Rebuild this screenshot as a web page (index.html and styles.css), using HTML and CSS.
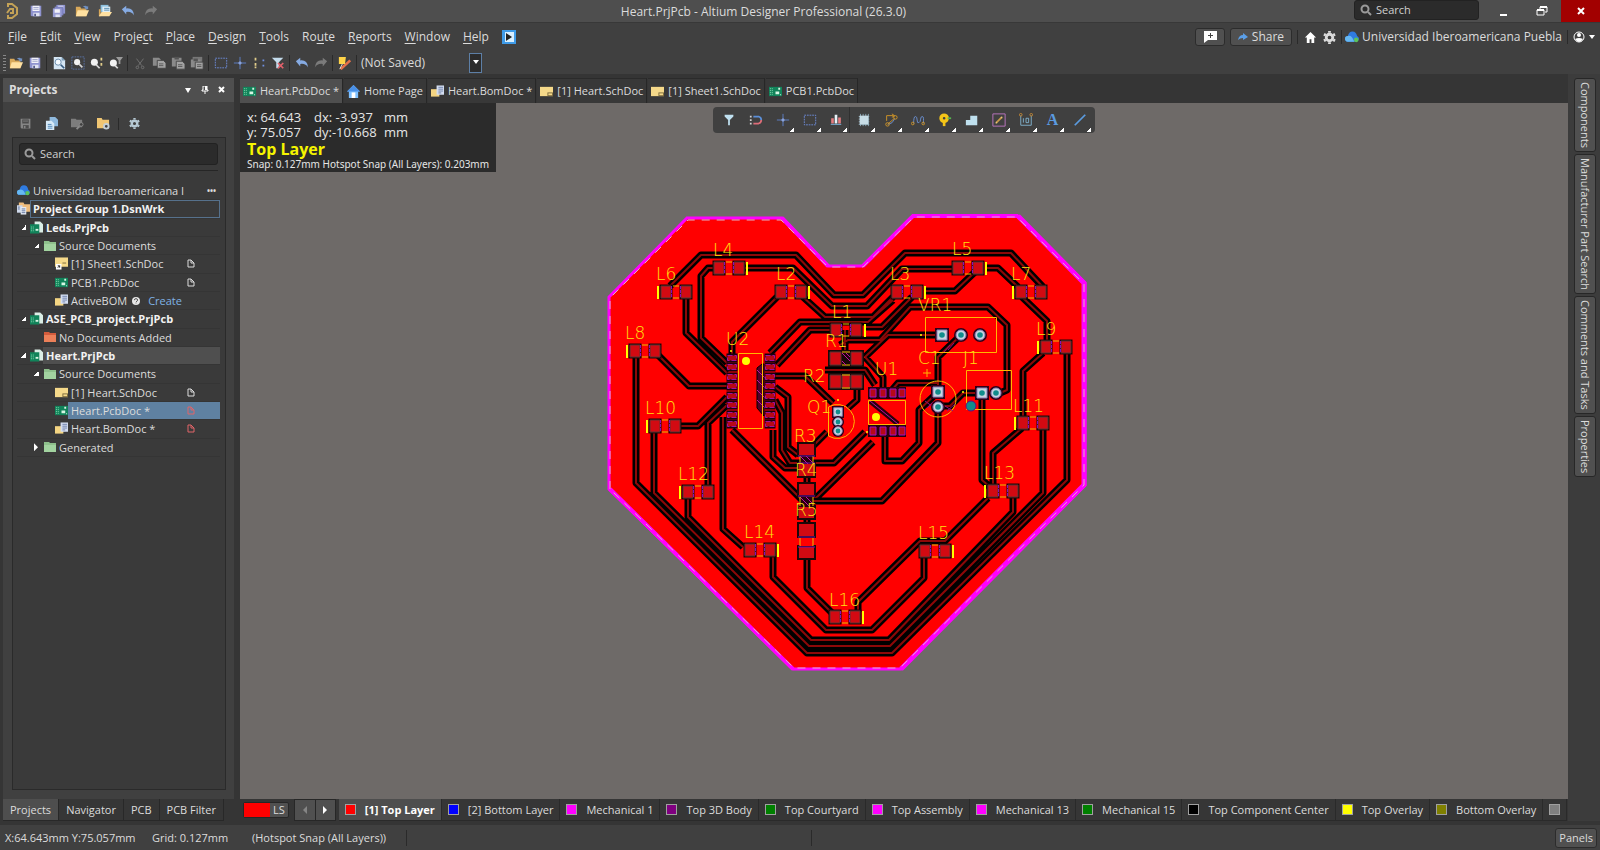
FILE: index.html
```html
<!DOCTYPE html>
<html lang="en">
<head>
<meta charset="utf-8">
<title>Heart.PrjPcb - Altium Designer Professional (26.3.0)</title>
<link rel="stylesheet" href="styles.css">
</head>
<body>
<svg class="sprite" aria-hidden="true">
  <symbol id="i-save" viewBox="0 0 16 16"><path d="M2 2h12v12H3l-1-1z" fill="#8f93cf"/><path d="M4 2h8v6H4z" fill="#f1f1f8"/><path d="M5 4h6M5 6h6" stroke="#9aa0c8"/><path d="M5 10h7v4H5z" fill="#dfe2f2"/><path d="M6 11h2v3H6z" fill="#555b8d"/></symbol>
  <symbol id="i-save-off" viewBox="0 0 16 16"><path d="M2 2h12v12H3l-1-1z" fill="#858585"/><path d="M4 3h8v5H4z" fill="#4c4c4c"/><path d="M5 5h6" stroke="#858585"/><path d="M5 10h7v4H5z" fill="#4c4c4c"/><path d="M6 11h2v3H6z" fill="#858585"/></symbol>
  <symbol id="i-saveall" viewBox="0 0 16 16"><path d="M5 1h10v10H5z" fill="#8f93cf"/><path d="M7 2h6v3H7z" fill="#e8e8f5"/><path d="M3 3h10v10H3z" fill="#7e83c2"/><path d="M1 5h10v10H1z" fill="#9a9ed6"/><path d="M3 6h6v4H3z" fill="#f1f1f8"/><path d="M4 12h5v3H4z" fill="#dfe2f2"/></symbol>
  <symbol id="i-open" viewBox="0 0 16 16"><path d="M1 3h5l1 2h6v9H1z" fill="#d9a95a"/><path d="M3 7h13l-3 7H1z" fill="#ffe0a0"/><path d="M9 3q3-2 5 0l1-1v4h-4l1-1q-1-2-3-2z" fill="#6f8fc0"/></symbol>
  <symbol id="i-openprj" viewBox="0 0 16 16"><path d="M3 1h9v8H3z" fill="#8ec1df"/><path d="M5 3h9v8H5z" fill="#dfeef6"/><path d="M7 5h6M7 7h6" stroke="#4d86aa"/><path d="M1 6h2v8H1z" fill="#d9a95a"/><path d="M4 9h12l-3 5H1z" fill="#ffe0a0"/></symbol>
  <symbol id="i-undo" viewBox="0 0 16 16"><path d="M1 6l5-4v3q8-1 9 8-3-5-9-4v3z" fill="#86abe3"/></symbol>
  <symbol id="i-redo" viewBox="0 0 16 16"><path d="M15 6l-5-4v3Q2 4 1 13q3-5 9-4v3z" fill="#7b7b7b"/></symbol>
  <symbol id="i-logo" viewBox="0 0 14 18"><path d="M3 5V2h4l5 4v6l-5 4H3v-3M2 11l3-4h3v4H5" fill="none" stroke="#c3a257" stroke-width="2"/></symbol>
  <symbol id="i-zoomdoc" viewBox="0 0 16 16"><path d="M2 1h9l4 4v10H2z" fill="#d5e6f4"/><path d="M11 1l4 4h-4z" fill="#7d9db8"/><circle cx="7" cy="7" r="3.500" fill="#f4faff" stroke="#5f83a6"/><path d="M10 10l4 4" stroke="#385d80" stroke-width="2"/></symbol>
  <symbol id="i-zoomarea" viewBox="0 0 16 16"><path d="M1 1h14v14H1z" fill="none" stroke="#5a74a8" stroke-dasharray="2 1"/><circle cx="7" cy="7" r="3.500" fill="#f2f2f2"/><path d="M9 9l4 4" stroke="#d5d5d5" stroke-width="2"/></symbol>
  <symbol id="i-zoomsel" viewBox="0 0 16 16"><circle cx="5" cy="7" r="4" fill="#f2f2f2"/><path d="M7 10l4 4" stroke="#d9d9d9" stroke-width="2"/><path d="M13 2v3M13 8v3" stroke="#e1cd8a" stroke-width="2"/></symbol>
  <symbol id="i-zoomflt" viewBox="0 0 16 16"><circle cx="5" cy="8" r="4" fill="#f2f2f2"/><path d="M7 11l3 3" stroke="#d9d9d9" stroke-width="2"/><path d="M8 1h8l-3 4v4h-2V5z" fill="#9a9a9a"/></symbol>
  <symbol id="i-cut" viewBox="0 0 16 16"><path d="M4 3l6 8M12 3l-6 8" stroke="#757575"/><circle cx="5" cy="13" r="1.500" fill="none" stroke="#757575"/><circle cx="11" cy="13" r="1.500" fill="none" stroke="#757575"/></symbol>
  <symbol id="i-copy" viewBox="0 0 16 16"><path d="M1 2h7l2 2v7H1z" fill="#8a8a8a"/><path d="M6 5h7l3 3v6H6z" fill="#a3a3a3" stroke="#444"/><path d="M8 9h5M8 11h5" stroke="#555"/></symbol>
  <symbol id="i-paste" viewBox="0 0 16 16"><path d="M1 2h11v10H1z" fill="#8a8a8a"/><path d="M4 1h5v3H4z" fill="#555"/><path d="M6 6h7l3 3v6H6z" fill="#a3a3a3" stroke="#444"/><path d="M8 10h5M8 12h5" stroke="#555"/></symbol>
  <symbol id="i-paste2" viewBox="0 0 16 16"><path d="M3 1h11v9H3z" fill="#777"/><path d="M1 4h11v9H1z" fill="#8a8a8a"/><path d="M4 3h5v3H4z" fill="#555"/><path d="M6 7h9v8H6z" fill="#a3a3a3" stroke="#444"/><path d="M8 10h5M8 12h5" stroke="#555"/></symbol>
  <symbol id="i-rect" viewBox="0 0 16 16"><path d="M1.500 2.500h13v11h-13z" fill="none" stroke="#6f8fe0" stroke-dasharray="2 1"/></symbol>
  <symbol id="i-cross" viewBox="0 0 16 16"><path d="M8 1v14M1 8h14" stroke="#5f83cf"/><path d="M8 6v4M6 8h4" stroke="#a3bdf5"/></symbol>
  <symbol id="i-dots" viewBox="0 0 16 16"><path d="M4 2v3M4 8v3M4 12v2" stroke="#e1cd8a" stroke-width="2"/><path d="M13 4v2M13 10v2" stroke="#6f8fe0" stroke-width="2"/></symbol>
  <symbol id="i-clearflt" viewBox="0 0 16 16"><path d="M1 2h13l-5 5v7H6V7z" fill="#c4dcec"/><path d="M8 8l6 6M14 8l-6 6" stroke="#e2616b" stroke-width="2"/></symbol>
  <symbol id="i-wand" viewBox="0 0 16 16"><path d="M3 15L14 5" stroke="#e5704a" stroke-width="3"/><path d="M1 1h8l-1 8H1z" fill="#ffd348"/><path d="M5 9l-3 6" stroke="#f0efe8"/></symbol>
  <symbol id="i-sch" viewBox="0 0 14 12"><path d="M0 1h14v10H0z" fill="#f5d98a"/><path d="M8 7h6v4H8z" fill="#7a693d"/><path d="M9 8h4v2H9z" fill="#f5d98a"/></symbol>
  <symbol id="i-pcb" viewBox="0 0 14 12"><path d="M0 1h14v10H0z" fill="#11835a"/><path d="M1 3h4M1 5h4M1 7h4M1 9h4" stroke="#8ee0b5" stroke-dasharray="1 1"/><path d="M7 6h4v3H7zM10 2h2v2h-2zM12 9h1v1h-1z" fill="#d8f5e4"/></symbol>
  <symbol id="i-bom" viewBox="0 0 14 13"><path d="M0 4h9v8H0z" fill="#f4d582"/><path d="M6 0h8v10H6z" fill="#d3ddf0"/><path d="M8 2h5M8 4h5M8 6h5M8 8h3" stroke="#6e80aa"/></symbol>
  <symbol id="i-home" viewBox="0 0 14 14"><path d="M7 0l7 7h-2v7H2V7H0z" fill="#7ec0ff"/><path d="M7 0l7 7H0z" fill="#4a90e6"/><path d="M5 8h4v6H5z" fill="#fff"/></symbol>
  <symbol id="i-prj" viewBox="0 0 14 13"><path d="M5 0h6l3 3v9H5z" fill="#dbeee6"/><path d="M0 3h10v10H0z" fill="#11835a"/><path d="M1 6h4M1 8h4M1 10h4" stroke="#8ee0b5" stroke-dasharray="1 1"/><path d="M6 8h3v2H6z" fill="#d8f5e4"/></symbol>
  <symbol id="i-folder" viewBox="0 0 12 10"><path d="M0 0h5l1 1h6v9H0z" fill="#8ec08c"/><path d="M0 3h12v7H0z" fill="#a2d3a0"/></symbol>
  <symbol id="i-folder-red" viewBox="0 0 12 10"><path d="M0 0h5l1 1h6v9H0z" fill="#d35c3c"/><path d="M0 3h12v7H0z" fill="#ec8059"/></symbol>
  <symbol id="i-group" viewBox="0 0 14 13"><path d="M2 0h5l1 2h6v8H2z" fill="#f0bd7d"/><path d="M0 3h6v8H0z" fill="#cfd9ea"/><path d="M4 5h6v8H4z" fill="#e9eff8"/><path d="M1 5h2M1 7h2M5 7h4M5 9h4M5 11h4" stroke="#5e7199"/></symbol>
  <symbol id="i-cloud" viewBox="0 0 15 12"><path d="M3 11q-3 0-3-3t3-3q1-5 5-5t5 5q2 1 2 3t-3 3z" fill="#2f7be0"/><path d="M3 11q-3 0-3-3t3-3q3-1 5 2l2 4z" fill="#66b8f2"/><circle cx="12" cy="9" r="2.500" fill="#5cc35a"/></symbol>
  <symbol id="i-search" viewBox="0 0 12 12"><circle cx="5" cy="5" r="3.500" fill="none" stroke="currentColor" stroke-width="2"/><path d="M8 8l3 3" stroke="currentColor" stroke-width="2"/></symbol>
  <symbol id="i-doc" viewBox="0 0 8 9"><path d="M1 1h3l3 3v4H1zM4 1v3h3" fill="none" stroke="currentColor"/></symbol>
  <symbol id="i-gear" viewBox="0 0 14 14"><circle cx="7" cy="7" r="3.500" fill="none" stroke="currentColor" stroke-width="3"/><path d="M7 0v2M7 12v2M1 3.500l2 1M11 9.500l2 1M13 3.500l-2 1M3 9.500l-2 1" stroke="currentColor" stroke-width="3"/></symbol>
  <symbol id="i-docs" viewBox="0 0 14 14"><path d="M5 0h6l3 3v7H5z" fill="#8fb9dd"/><path d="M1 4h6l3 3v7H1z" fill="#d6e9f7"/><path d="M3 8h4M3 10h5M3 12h5" stroke="#4b83b4"/></symbol>
  <symbol id="i-fsearch" viewBox="0 0 14 14"><path d="M0 2h5l1 1h6v8H0z" fill="#7d7d7d"/><circle cx="11" cy="8" r="2" fill="#404040" stroke="#8c8c8c"/><path d="M9 10l-3 3" stroke="#8c8c8c" stroke-width="2"/></symbol>
  <symbol id="i-fgear" viewBox="0 0 14 14"><path d="M0 1h5l1 2h7v9H0z" fill="#f0c673"/><circle cx="10" cy="10" r="2.500" fill="#404040" stroke="#c3d0d8" stroke-width="2"/></symbol>
  <symbol id="i-q" viewBox="0 0 10 10"><circle cx="5" cy="5" r="5" fill="#e6e6e6"/><path d="M3 4q0-2 2-2t2 2q0 1-2 2M5 7v1" fill="none" stroke="#333"/></symbol>
  <!-- board parts -->
  <symbol id="p-led" viewBox="-20 -10 40 20" overflow="visible"><path d="M-16.500-7.500h13v15h-13zM3.500-7.500h13v15h-13z" fill="#200606"/><path d="M-15-6h10v12h-10zM5-6h10v12H5z" fill="#d20a12" stroke="#5a3434"/><path d="M-3-6h6M-3 6h6" stroke="#e8c000"/><path d="M-4.500-6v12M4.500-6v12" stroke="#8010c0" stroke-dasharray="3 1"/></symbol>
  <symbol id="p-ic" viewBox="-6 -4 12 8" overflow="visible"><path d="M-5.500-4.500h11v9h-11z" fill="#1a0010"/><path d="M-4.500-2.500h9v5h-9z" fill="#b80818" stroke="#a010a0" stroke-dasharray="5 2"/></symbol>
  <symbol id="p-sq" viewBox="-7 -7 14 14" overflow="visible"><path d="M-7-7H7V7H-7z" fill="#300018"/><path d="M-5-5H5V5H-5z" fill="#c8d4e0" stroke="#8a80b8"/><circle r="2.800" fill="#118c8c"/></symbol>
  <symbol id="p-rd" viewBox="-7 -7 14 14" overflow="visible"><circle r="7" fill="#300018"/><circle r="5" fill="#c8d4e0" stroke="#8a80b8"/><circle r="2.800" fill="#118c8c"/></symbol>
</svg>

<header class="titlebar">
  <div class="quick">
    <svg class="logo"><use href="#i-logo"/></svg>
    <button class="ib" aria-label="Save"><svg><use href="#i-save"/></svg></button>
    <button class="ib" aria-label="Save all"><svg><use href="#i-saveall"/></svg></button>
    <button class="ib" aria-label="Open"><svg><use href="#i-open"/></svg></button>
    <button class="ib" aria-label="Open project"><svg><use href="#i-openprj"/></svg></button>
    <button class="ib" aria-label="Undo"><svg><use href="#i-undo"/></svg></button>
    <button class="ib" aria-label="Redo"><svg><use href="#i-redo"/></svg></button>
  </div>
  <h1 class="title">Heart.PrjPcb - Altium Designer Professional (26.3.0)</h1>
  <label class="search top-search"><svg><use href="#i-search"/></svg><input type="text" placeholder="Search" aria-label="Search"></label>
  <div class="winbtns">
    <button aria-label="Minimize"><svg viewBox="0 0 12 12"><path d="M3 10h7" stroke="#fff" stroke-width="2"/></svg></button>
    <button aria-label="Restore"><svg viewBox="0 0 12 12"><path d="M4 4V2h7v5H9M1 5h7v5H1z" fill="none" stroke="#fff"/><path d="M1 5h7M4 2h7" stroke="#fff" stroke-width="2"/></svg></button>
    <button class="close" aria-label="Close"><svg viewBox="0 0 12 12"><path d="M3 3l6 6M9 3l-6 6" stroke="#fff" stroke-width="2"/></svg></button>
  </div>
</header>

<nav class="menubar">
  <button><u>F</u>ile</button><button><u>E</u>dit</button><button><u>V</u>iew</button><button>Proje<u>c</u>t</button><button><u>P</u>lace</button><button><u>D</u>esign</button><button><u>T</u>ools</button><button>Ro<u>u</u>te</button><button><u>R</u>eports</button><button><u>W</u>indow</button><button><u>H</u>elp</button>
  <button class="runbtn" aria-label="Run"><svg viewBox="0 0 14 14"><path d="M0 0h14v14H0z" fill="#3f9be8"/><path d="M3 2h9v10H3z" fill="#d9efff"/><path d="M4 3l6 4-6 4z" fill="#222"/></svg></button>
  <div class="account">
    <button class="raised" aria-label="Comment"><svg viewBox="0 0 14 12"><path d="M1 0h13v9H5l-4 3z" fill="#fff"/><path d="M7.500 2v5M5 4.500h5" stroke="#444"/></svg></button>
    <button class="raised share"><svg viewBox="0 0 10 10"><path d="M0 8q1-5 5-5V1l5 4-5 3V6Q2 6 0 8z" fill="#5b9fe8"/></svg>Share</button>
    <i class="sep"></i>
    <button class="ai" aria-label="Home"><svg viewBox="0 0 14 14"><path d="M7 1l6 6h-2v6H8V9H6v4H3V7H1z" fill="#fff"/></svg></button>
    <button class="ai" aria-label="Settings"><svg><use href="#i-gear"/></svg></button>
    <i class="sep"></i>
    <button class="org"><svg><use href="#i-cloud"/></svg>Universidad Iberoamericana Puebla</button>
    <i class="sep"></i>
    <button class="user" aria-label="User"><svg viewBox="0 0 22 12"><circle cx="6" cy="6" r="5" fill="#404040" stroke="#fff"/><circle cx="6" cy="4" r="2" fill="#fff"/><path d="M2 8q4-2 8 0-2 3-4 3T2 8z" fill="#fff"/><path d="M16 4h6l-3 4z" fill="#fff"/></svg></button>
  </div>
</nav>

<div class="toolbar">
  <i class="grip"></i>
  <button class="ib" aria-label="Open"><svg><use href="#i-open"/></svg></button><button class="ib" aria-label="Save"><svg><use href="#i-save"/></svg></button>
  <i class="sep"></i>
  <button class="ib" aria-label="Fit document"><svg><use href="#i-zoomdoc"/></svg></button><button class="ib" aria-label="Zoom area"><svg><use href="#i-zoomarea"/></svg></button><button class="ib" aria-label="Zoom selected"><svg><use href="#i-zoomsel"/></svg></button><button class="ib" aria-label="Zoom filtered"><svg><use href="#i-zoomflt"/></svg></button>
  <i class="sep"></i>
  <button class="ib" aria-label="Cut"><svg><use href="#i-cut"/></svg></button><button class="ib" aria-label="Copy"><svg><use href="#i-copy"/></svg></button><button class="ib" aria-label="Paste"><svg><use href="#i-paste"/></svg></button><button class="ib" aria-label="Paste special"><svg><use href="#i-paste2"/></svg></button>
  <i class="sep"></i>
  <button class="ib" aria-label="Select area"><svg><use href="#i-rect"/></svg></button><button class="ib" aria-label="Move"><svg><use href="#i-cross"/></svg></button><button class="ib" aria-label="Deselect"><svg><use href="#i-dots"/></svg></button><button class="ib" aria-label="Clear filter"><svg><use href="#i-clearflt"/></svg></button>
  <i class="sep"></i>
  <button class="ib" aria-label="Undo"><svg><use href="#i-undo"/></svg></button><button class="ib" aria-label="Redo"><svg><use href="#i-redo"/></svg></button>
  <i class="sep"></i>
  <button class="ib" aria-label="Highlight"><svg><use href="#i-wand"/></svg></button>
  <i class="sep"></i>
  <div class="combo"><span>(Not Saved)</span><button aria-label="Choose view"><svg viewBox="0 0 8 5"><path d="M1 0h6L4 4z" fill="#fff"/></svg></button></div>
</div>

<div class="work">
  <aside class="left">
    <section class="panel">
      <header class="panel-head"><h2>Projects</h2>
        <button aria-label="Panel menu"><svg viewBox="0 0 8 8"><path d="M1 2h6L4 7z" fill="#fff"/></svg></button>
        <button aria-label="Pin"><svg viewBox="0 0 8 8"><path d="M2 0h4v4h1v1H1V4h1zM4 5v3" fill="none" stroke="#fff"/><path d="M4 0h2v4H4z" fill="#fff"/></svg></button>
        <button aria-label="Close panel"><svg viewBox="0 0 8 8"><path d="M1 1l5 5M6 1L1 6" stroke="#fff" stroke-width="2"/></svg></button>
      </header>
      <div class="panel-tools">
        <button class="pb" aria-label="Save"><svg><use href="#i-save-off"/></svg></button><button class="pb" aria-label="Documents"><svg><use href="#i-docs"/></svg></button><button class="pb" aria-label="Explore"><svg><use href="#i-fsearch"/></svg></button><button class="pb" aria-label="Project options"><svg><use href="#i-fgear"/></svg></button><i class="sep"></i><button class="pb gear" aria-label="Settings"><svg><use href="#i-gear"/></svg></button>
      </div>
      <div class="tree-box">
        <label class="search"><svg><use href="#i-search"/></svg><input type="text" placeholder="Search" aria-label="Search projects"></label>
        <hr>
        <ul class="tree">
          <li><svg class="ti"><use href="#i-cloud"/></svg><span>Universidad Iberoamericana I</span><b class="more">•••</b></li>
          <li class="group"><svg class="ti"><use href="#i-group"/></svg><span class="box">Project Group 1.DsnWrk</span></li>
          <li class="d1"><i class="ar"></i><svg class="ti"><use href="#i-prj"/></svg><span class="b">Leds.PrjPcb</span></li>
          <li class="d2"><i class="ar"></i><svg class="fi"><use href="#i-folder"/></svg><span>Source Documents</span></li>
          <li class="d3"><svg class="ti" viewBox="0 0 14 13"><path d="M0 0h14v10H0z" fill="#f5d98a"/><path d="M8 6h4" stroke="#7a693d"/><path d="M1 7h6v6H1z" fill="#fff"/><path d="M3 11l2-2M3 9h2v2" fill="none" stroke="#222"/></svg><span>[1] Sheet1.SchDoc</span><svg class="st"><use href="#i-doc"/></svg></li>
          <li class="d3"><svg class="ti"><use href="#i-pcb"/></svg><span>PCB1.PcbDoc</span><svg class="st"><use href="#i-doc"/></svg></li>
          <li class="d3"><svg class="ti"><use href="#i-bom"/></svg><span>ActiveBOM</span><svg class="q"><use href="#i-q"/></svg><a href="#create">Create</a></li>
          <li class="d1"><i class="ar"></i><svg class="ti"><use href="#i-prj"/></svg><span class="b">ASE_PCB_project.PrjPcb</span></li>
          <li class="d2 noar"><svg class="fi"><use href="#i-folder-red"/></svg><span>No Documents Added</span></li>
          <li class="d1"><i class="ar"></i><svg class="ti"><use href="#i-prj"/></svg><span class="b cur">Heart.PrjPcb</span></li>
          <li class="d2"><i class="ar"></i><svg class="fi"><use href="#i-folder"/></svg><span>Source Documents</span></li>
          <li class="d3"><svg class="ti"><use href="#i-sch"/></svg><span>[1] Heart.SchDoc</span><svg class="st"><use href="#i-doc"/></svg></li>
          <li class="d3 sel"><svg class="ti"><use href="#i-pcb"/></svg><span>Heart.PcbDoc *</span><svg class="st red"><use href="#i-doc"/></svg></li>
          <li class="d3"><svg class="ti"><use href="#i-bom"/></svg><span>Heart.BomDoc *</span><svg class="st red"><use href="#i-doc"/></svg></li>
          <li class="d2"><i class="ar shut"></i><svg class="fi"><use href="#i-folder"/></svg><span>Generated</span></li>
        </ul>
      </div>
    </section>
    <nav class="panel-tabs"><button class="on">Projects</button><button>Navigator</button><button>PCB</button><button>PCB Filter</button></nav>
  </aside>

  <main class="editor">
    <nav class="doctabs">
      <button class="on"><svg><use href="#i-pcb"/></svg>Heart.PcbDoc *</button>
      <button><svg><use href="#i-home"/></svg>Home Page</button>
      <button><svg><use href="#i-bom"/></svg>Heart.BomDoc *</button>
      <button><svg><use href="#i-sch"/></svg>[1] Heart.SchDoc</button>
      <button><svg><use href="#i-sch"/></svg>[1] Sheet1.SchDoc</button>
      <button><svg><use href="#i-pcb"/></svg>PCB1.PcbDoc</button>
    </nav>
    <div class="canvas">
      <svg class="board" viewBox="240 103 1328 696" role="img" aria-label="Heart shaped circuit board, top layer">
        <path d="M687 218H782L828 266H863L913 216H1018L1085 283V485L901 669H793L609 489V297Z" fill="#f00" stroke="#f0f" stroke-width="3"/>
        <path d="M1018 216L1084 283V485L901 669" fill="none" stroke="#f0f" stroke-width="5"/>
        <path d="M828 266L782 218M863 266L913 216H1018M793 669L610 489" fill="none" stroke="#f0f" stroke-width="4"/>
        <path d="M610 489V298L688 220H781L828 267H863L914 217H1017L1084 284V485L900 668H794L610 489" fill="none" stroke="#e6b0c8" stroke-dasharray="8 7"/>
        <defs><path id="tracks" fill="none" stroke-linejoin="round" d="
          M670 286L701 255H796L834 295H863L905 253H1011L1043 287
          M745 268H793L832 306H867L902 269H952
          M803 297L825 317H873L893 297
          M925 291H955L975 272 M987 268H998L1018 287
          M1022 297L1047 321V343 M1043 353L1023 371V417
          M1067 350V480L892 653H807L636 483V355
          M658 355L689 386H727 M680 426H698L727 397
          M654 433V493L809 646H890L1043 493V430
          M688 498V517L811 640H889L1013 512V497
          M773 557V577L826 630H872L924 578V558
          M858 612V602L920 541H945V541L988 498
          M982 398V480L990 487 M1022 428L993 453V485
          M807 558V588L832 613 M723 417V529L743 547
          M708 485V423L727 405 M732 430L803 501H882L938 443V407
          M686 298V333L727 373 M713 268H708L701 276V338L727 363
          M777 297L732 342V355 M770 353L800 322H868L893 300
          M777 365L810 330H830 M865 327H882L912 297
          M840 345L848 340H880L910 307H988L1007 325V390L1000 393
          M865 357L888 335H942 M865 357L883 377V390
          M961 335L938 357V392 M938 383H898L892 390
          M982 393H963L950 406H938 M938 392L919 410V443L902 461H885V437
          M825 370H865L875 385 M857 390V400L848 408
          M873 442L817 497 M865 432L834 463H790L782 450V413L775 400
          M775 376H805L833 403 M775 387L788 397V447L798 455
          M773 430V457L785 468H803 M827 432L812 447
          M845 330V365 M807 443V525"/></defs>
        <use href="#tracks" stroke="#000" stroke-width="7"/>
        <use href="#tracks" stroke="#8c0808" stroke-width="2"/>
        <path d="M762 364L757 368V408L764 416V364Z" fill="#500028" stroke="#000"/>
        <path d="M757 370l8 8M757 380l8 8M757 390l8 8M757 400l8 8" stroke="#c010a0"/>
        <!-- diodes -->
        <g class="parts">
          <use href="#p-led" x="709" y="258" width="40" height="20"/><use href="#p-led" x="656" y="282" width="40" height="20"/><use href="#p-led" x="771" y="282" width="40" height="20"/><use href="#p-led" x="625" y="341" width="40" height="20"/><use href="#p-led" x="645" y="416" width="40" height="20"/><use href="#p-led" x="826" y="320" width="40" height="20"/><use href="#p-led" x="948" y="258" width="40" height="20"/><use href="#p-led" x="887" y="282" width="40" height="20"/><use href="#p-led" x="1011" y="282" width="40" height="20"/><use href="#p-led" x="1036" y="337" width="40" height="20"/><use href="#p-led" x="1013" y="413" width="40" height="20"/><use href="#p-led" x="678" y="482" width="40" height="20"/><use href="#p-led" x="740" y="540" width="40" height="20"/><use href="#p-led" x="825" y="607" width="40" height="20"/><use href="#p-led" x="983" y="481" width="40" height="20"/><use href="#p-led" x="915" y="541" width="40" height="20"/>
        </g>
        <path d="M747 262v13M658 286v13M809 286v13M627 345v13M647 420v13M865 324v13M986 262v13M925 286v13M1013 286v13M1038 341v13M1015 417v13M680 486v13M778 544v13M863 611v13M985 485v13M953 545v13" stroke="#ff0" stroke-width="2"/>
        <!-- resistors -->
        <path d="M828 350h36v17h-36zM828 373h36v17h-36z" fill="#1a0808"/>
        <path d="M830 352h11v13h-11zM851 352h11v13h-11zM830 375h11v13h-11zM851 375h11v13h-11zM842 375h8v13h-8z" fill="#d20a12" stroke="#5a3434"/>
        <path d="M842 352h8M842 365h8M842 375h8M842 388h8" stroke="#e8c000"/><path d="M842 353l8 8M842 361l4 4M846 353l4 4" stroke="#c010a0"/>
        <path d="M798 443h17v13h-17zM798 463h17v14h-17zM798 483h17v13h-17zM798 506h17v13h-17zM798 523h17v14h-17zM798 546h17v13h-17z" fill="#d20a12" stroke="#1a0808" stroke-width="2"/>
        <path d="M800 456h13v8h-13zM800 496h13v11h-13z" fill="#28000c"/><path d="M800 538h13v8h-13z" fill="#f00"/><path d="M800 456l8 8M806 456l7 7M800 497l9 9M806 497l7 7" stroke="#c010a0"/>
        <path d="M800 538v8M813 538v8M800 456v8M813 456v8M800 497v9M813 497v9" stroke="#e8c000"/>
        <path d="M798 456h17M798 463h17M798 496h17M798 537h17M798 547h17" stroke="#7010b0"/>
        <!-- U2 -->
        <g>
          <use href="#p-ic" x="726" y="354" width="12" height="8"/><use href="#p-ic" x="726" y="363" width="12" height="8"/><use href="#p-ic" x="726" y="373" width="12" height="8"/><use href="#p-ic" x="726" y="382" width="12" height="8"/><use href="#p-ic" x="726" y="392" width="12" height="8"/><use href="#p-ic" x="726" y="401" width="12" height="8"/><use href="#p-ic" x="726" y="411" width="12" height="8"/><use href="#p-ic" x="726" y="420" width="12" height="8"/>
          <use href="#p-ic" x="764" y="354" width="12" height="8"/><use href="#p-ic" x="764" y="363" width="12" height="8"/><use href="#p-ic" x="764" y="373" width="12" height="8"/><use href="#p-ic" x="764" y="382" width="12" height="8"/><use href="#p-ic" x="764" y="392" width="12" height="8"/><use href="#p-ic" x="764" y="401" width="12" height="8"/><use href="#p-ic" x="764" y="411" width="12" height="8"/><use href="#p-ic" x="764" y="420" width="12" height="8"/>
          <path d="M738.500 353.500h24v75h-24z" fill="none" stroke="#ffb800"/><circle cx="746" cy="361" r="4" fill="#ff0"/><circle cx="731" cy="351" r="1" fill="#ff0"/>
        </g>
        <!-- U1 -->
        <path d="M868 387h38v12h-38zM868 425h38v12h-38z" fill="#28000c"/>
        <path d="M870 389h6v8h-6zM880 389h6v8h-6zM890 389h6v8h-6zM899 389h6v8h-6zM870 427h6v8h-6zM880 427h6v8h-6zM890 427h6v8h-6zM899 427h6v8h-6z" fill="#b80818" stroke="#a010c0"/>
        <path d="M870 401l28 23" stroke="#28000c" stroke-width="5"/><path d="M870 401l28 23" stroke="#b010a0"/>
        <path d="M868.500 400.500h37v24h-37z" fill="none" stroke="#ffb800"/><circle cx="876" cy="417" r="4" fill="#ff0"/><circle cx="867" cy="432" r="1" fill="#ff0"/>
        <!-- through-hole parts -->
        <path d="M925.500 317.500h71v35h-71zM966.500 370.500h45v39h-45z" fill="none" stroke="#ffb800"/>
        <circle cx="938" cy="399" r="18" fill="none" stroke="#ffb800"/>
        <path d="M828.500 407v29M828.500 407a17 17 0 1 1 0 29" fill="none" stroke="#ffb800"/>
        <path d="M927 369v8M923 373h8" stroke="#ffb800"/>
        <path d="M945 406l8 5M947 411l8-7M925 401l8 6M927 408l6-6M948 350l6-7M944 352l6-7" stroke="#8a1080"/>
        <circle cx="921" cy="335" r="1" fill="#ff0"/><circle cx="963" cy="392" r="1" fill="#ff0"/><circle cx="838" cy="400" r="1" fill="#ff0"/>
        <use href="#p-sq" x="935" y="328" width="14" height="14"/><use href="#p-rd" x="954" y="328" width="14" height="14"/><use href="#p-rd" x="973" y="328" width="14" height="14"/>
        <use href="#p-sq" x="975" y="386" width="14" height="14"/><use href="#p-rd" x="989" y="386" width="14" height="14"/>
        <use href="#p-sq" x="931" y="385" width="14" height="14"/><use href="#p-rd" x="931" y="400" width="14" height="14"/>
        <use href="#p-sq" x="832" y="406" width="12" height="12"/><use href="#p-rd" x="832" y="416" width="12" height="12"/><use href="#p-rd" x="832" y="425" width="12" height="12"/>
        <circle cx="971" cy="406" r="5" fill="#118c8c" stroke="#5a1080"/>
        <g class="desig">
          <text x="713" y="256">L4</text><text x="656" y="280">L6</text><text x="776" y="280">L2</text><text x="625" y="339">L8</text><text x="726" y="345">U2</text><text x="645" y="414">L10</text><text x="825" y="347">R1</text><text x="803" y="382">R2</text><text x="807" y="413">Q1</text><text x="832" y="318">L1</text><text x="794" y="442">R3</text><text x="795" y="476">R4</text><text x="795" y="516">R5</text><text x="678" y="480">L12</text><text x="744" y="538">L14</text><text x="829" y="606">L16</text><text x="952" y="255">L5</text><text x="890" y="280">L3</text><text x="1011" y="280">L7</text><text x="918" y="311">VR1</text><text x="1036" y="335">L9</text><text x="918" y="364">C1</text><text x="963" y="364">J1</text><text x="875" y="375">U1</text><text x="1013" y="412">L11</text><text x="984" y="479">L13</text><text x="918" y="539">L15</text>
        </g>
      </svg>
      <div class="hud">
        <div class="xy"><span>x: 64.643</span><span>dx: -3.937</span><span>mm</span><span>y: 75.057</span><span>dy:-10.668</span><span>mm</span></div>
        <strong>Top Layer</strong>
        <small>Snap: 0.127mm Hotspot Snap (All Layers): 0.203mm</small>
      </div>
      <div class="activebar">
        <button aria-label="Filter"><svg viewBox="0 0 16 16"><path d="M3 2h10v2L9 8v6H7V8L3 4z" fill="#bfe0f0"/></svg></button>
        <button aria-label="Snap"><svg viewBox="0 0 16 16"><path d="M2 3v2M2 7v2M2 11v2" stroke="#d0d0d0" stroke-width="2"/><path d="M5 4h6q3 1 3 4" fill="none" stroke="#5c8fd8" stroke-width="2"/><path d="M5 12h6q3-1 3-4" fill="none" stroke="#dc6d78" stroke-width="2"/></svg></button>
        <button class="m" aria-label="Move"><svg><use href="#i-cross"/></svg></button>
        <button class="m" aria-label="Select"><svg><use href="#i-rect"/></svg></button>
        <button class="m end" aria-label="Align"><svg viewBox="0 0 16 16"><path d="M4 6v6M12 5v7" stroke="#e47c80" stroke-width="3"/><path d="M8 2v10" stroke="#e9f2f8" stroke-width="3"/><path d="M2 13h12" stroke="#7db7e0"/></svg></button>
        <button class="m" aria-label="Component"><svg viewBox="0 0 16 16"><path d="M2 4h12M2 7h12M2 10h12M2 13h12M4 1v14M7 1v14M10 1v14M13 1v14" stroke="#8faebc"/><path d="M3 3h10v10H3z" fill="#c8dde6"/></svg></button>
        <button class="m" aria-label="Route"><svg viewBox="0 0 16 16"><path d="M3 9V3h8M9 1l3 2-3 2M4 13l8-7" fill="none" stroke="#d99a26"/><path d="M5 13q5-1 7-6" fill="none" stroke="#6d94d8"/><circle cx="4" cy="13" r="2" fill="none" stroke="#d99a26"/><circle cx="13" cy="5" r="2" fill="none" stroke="#d99a26"/></svg></button>
        <button class="m" aria-label="Tune"><svg viewBox="0 0 16 16"><path d="M3 12q0-8 2-8t2 4 2 3 2-4 2-3 1 8" fill="none" stroke="#6d94d8"/><circle cx="2" cy="12" r="1.500" fill="none" stroke="#d99a26"/><circle cx="14" cy="12" r="1.500" fill="none" stroke="#d99a26"/></svg></button>
        <button class="m" aria-label="Via"><svg viewBox="0 0 16 16"><circle cx="7" cy="6" r="3.500" fill="#404040" stroke="#f5c518" stroke-width="4"/><path d="M7 10v5" stroke="#f5c518" stroke-width="3"/><path d="M11 6h4" stroke="#57b64f" stroke-width="2"/></svg></button>
        <button class="m" aria-label="Polygon"><svg viewBox="0 0 16 16"><path d="M1 14V8h5V3h8v11z" fill="#bfe0ee"/></svg></button>
        <button class="m" aria-label="Room"><svg viewBox="0 0 16 16"><path d="M1 1h14v14H1z" fill="none" stroke="#c478c8"/><path d="M5 11l6-6" stroke="#c99b49" stroke-width="2"/><circle cx="5" cy="11" r="1" fill="#e8c47a"/><circle cx="11" cy="5" r="1" fill="#e8c47a"/></svg></button>
        <button class="m" aria-label="Dimension"><svg viewBox="0 0 16 16"><path d="M2 3v11h12V3M5 6v5M8 6h3v5H8z" fill="none" stroke="#84b7d4"/><circle cx="2" cy="2" r="1.500" fill="none" stroke="#c98c35"/><circle cx="14" cy="2" r="1.500" fill="none" stroke="#c98c35"/></svg></button>
        <button class="m glyph">A</button>
        <button class="m" aria-label="Line"><svg viewBox="0 0 16 16"><path d="M2 14L14 2" stroke="#5b9be0" stroke-width="2"/></svg></button>
      </div>
    </div>
    <nav class="layers">
      <div class="ls"><i></i><button>LS</button></div>
      <div class="arrows"><button aria-label="Previous layers"><svg viewBox="0 0 6 8"><path d="M5 0v8L1 4z" fill="#858585"/></svg></button><button aria-label="Next layers"><svg viewBox="0 0 6 8"><path d="M1 0v8l4-4z" fill="#fff"/></svg></button></div>
      <button class="layer on"><i class="c-red"></i>[1] Top Layer</button>
      <button class="layer"><i class="c-blue"></i>[2] Bottom Layer</button>
      <button class="layer"><i class="c-mag"></i>Mechanical 1</button>
      <button class="layer"><i class="c-pur"></i>Top 3D Body</button>
      <button class="layer"><i class="c-grn"></i>Top Courtyard</button>
      <button class="layer"><i class="c-mag"></i>Top Assembly</button>
      <button class="layer"><i class="c-mag"></i>Mechanical 13</button>
      <button class="layer"><i class="c-grn"></i>Mechanical 15</button>
      <button class="layer"><i class="c-blk"></i>Top Component Center</button>
      <button class="layer"><i class="c-yel"></i>Top Overlay</button>
      <button class="layer"><i class="c-olv"></i>Bottom Overlay</button>
      <button class="layer" aria-label="More layers"><i class="c-gry"></i></button>
    </nav>
  </main>

  <aside class="right"><button>Components</button><button>Manufacturer Part Search</button><button>Comments and Tasks</button><button>Properties</button></aside>
</div>

<footer class="status"><span class="s1">X:64.643mm Y:75.057mm</span><span class="s2">Grid: 0.127mm</span><span class="s3">(Hotspot Snap (All Layers))</span><i class="sep"></i><span class="s4"></span><i class="sep"></i><button class="raised">Panels</button></footer>
</body>
</html>
```
FILE: styles.css
```css
* { box-sizing: border-box; }
html, body { height: 100%; margin: 0; }
body {
  display: flex; flex-direction: column; overflow: hidden;
  background: #353535; color: #dcdcdc;
  font: 12px/16px "Open Sans", "Noto Sans", sans-serif;
}
button, input { font: inherit; color: inherit; border: 0; padding: 0; margin: 0; background: none; }
button { display: flex; align-items: center; justify-content: center; white-space: nowrap; }
svg { display: block; flex: none; }
i { display: block; flex: none; }
.sprite { position: absolute; width: 0; height: 0; }
.sep { width: 1px; height: 16px; background: #2a2a2a; }

/* title bar */
.titlebar { display: flex; height: 23px; flex: none; background: #4e4e4e; border-bottom: 1px solid #383838; }
.quick { display: flex; align-items: center; gap: 7px; padding-left: 5px; }
.quick .logo { width: 14px; height: 18px; margin-right: 2px; }
.ib svg { width: 14px; height: 14px; }
.quick .ib { width: 16px; }
.title { flex: 1; margin: 0; padding-left: 14px; text-align: center; font-size: 12px; font-weight: 400; line-height: 24px; }
.search { display: flex; align-items: center; gap: 4px; background: #2b2b2b; border: 1px solid #222; border-radius: 3px; color: #9a9a9a; font-size: 11px; }
.search svg { width: 12px; height: 12px; }
.search input { flex: 1; min-width: 0; color: #dcdcdc; outline: 0; }
.search input::placeholder { color: #d0d0d0; opacity: 1; }
.top-search { width: 125px; height: 20px; padding: 0 5px; }
.winbtns { display: flex; padding-left: 4px; }
.winbtns button { width: 39px; }
.winbtns svg { width: 12px; height: 12px; }
.winbtns .close { background: #a20000; }

/* menu */
.menubar { display: flex; align-items: center; gap: 13px; height: 28px; flex: none; padding: 0 5px 0 8px; background: #404040; }
.menubar u { text-underline-offset: 2px; }
.runbtn svg { width: 14px; height: 14px; }
.account { display: flex; align-items: center; gap: 5px; margin-left: auto; }
.raised { height: 18px; padding: 0 7px; background: #505050; border: 1px solid #2c2c2c; border-radius: 3px; }
.raised svg { width: 14px; height: 12px; }
.share svg { width: 10px; height: 10px; margin-right: 4px; }
.account .sep { height: 14px; }
.ai { width: 14px; }
.ai svg { width: 13px; height: 13px; }
.org { gap: 3px; margin-left: -2px; }
.org svg { width: 14px; height: 12px; }
.user svg { width: 22px; height: 12px; }

/* toolbar */
.toolbar { display: flex; align-items: center; height: 23px; flex: none; padding-left: 3px; background: #404040; }
.toolbar .ib { width: 19px; height: 20px; }
.toolbar .sep { margin: 0 2px; }
.grip { width: 3px; height: 16px; background: repeating-linear-gradient(#888 0 1px, #404040 1px 3px); }
.combo { display: flex; align-items: center; width: 123px; padding-left: 2px; }
.combo span { flex: 1; }
.combo button { width: 13px; height: 20px; border: 1px solid #5d7fa6; background: #2c2c2c; }
.combo svg { width: 8px; height: 5px; }

/* work area */
.work { display: flex; flex: 1; min-height: 0; }
.left { display: flex; flex-direction: column; width: 240px; flex: none; padding: 4px 6px 4px 3px; }
.panel { display: flex; flex-direction: column; flex: 1; min-height: 0; padding-bottom: 9px; background: #404040; }
.panel-head { display: flex; align-items: center; gap: 9px; height: 24px; padding: 0 8px 0 6px; background: #4f4f4f; }
.panel-head h2 { flex: 1; margin: 0; font-size: 12px; font-weight: 700; }
.panel-head svg { width: 8px; height: 8px; }
.panel-tools { display: flex; align-items: center; height: 35px; padding: 8px 0 0 9px; }
.pb { width: 26px; }
.pb svg { width: 13px; height: 13px; }
.panel-tools .sep { height: 12px; margin: 0 2px; }
.gear { color: #b5c8d2; }
.gear svg { width: 11px; height: 11px; }
.tree-box { flex: 1; margin: 0 8px 0 9px; padding: 5px 5px 4px 4px; background: #3a3a3a; border: 1px solid #2a2a2a; }
.tree-box .search { height: 22px; margin: 0 2px; padding: 0 4px; }
.tree-box hr { height: 1px; margin: 5px 2px 11px; border: 0; background: #262626; }
.tree { display: grid; grid-auto-rows: 1fr; height: 275px; margin: 0; padding: 0; list-style: none; font-size: 11px; }
.tree li { display: flex; align-items: stretch; min-height: 0; position: relative; border-bottom: 1px solid #353535; }
.tree li > * { align-self: center; }
.tree li > span { flex: 1; align-self: stretch; padding-left: 3px; white-space: nowrap; line-height: 18px; }
.tree .ti { width: 13px; height: 13px; }
.tree .fi { width: 12px; height: 10px; }
.more { padding-right: 4px; font-size: 8px; }
.tree .box { border: 1px solid #56718c; padding-left: 2px; font-weight: 700; line-height: 16px; color: #f2f2f2; }
.tree .b { font-weight: 700; color: #f2f2f2; }
.tree .cur { background: #4f4f4f; }
.tree .d1 { padding-left: 4px; }
.tree .d2 { padding-left: 17px; }
.tree .d2.noar { padding-left: 27px; }
.tree .d3 { padding-left: 38px; }
.ar { width: 5px; height: 5px; margin-right: 5px; background: linear-gradient(135deg, transparent 50%, #fff 50%); }
.d1 .ar { margin-right: 4px; }
.ar.shut { width: 5px; height: 8px; clip-path: polygon(0 0, 80% 50%, 0 100%); background: #fff; }
.tree .st { width: 8px; height: 9px; margin-right: 25px; }
.tree .sel::before { content: ""; position: absolute; inset: 0 0 0 51px; background: #5f81a1; }
.tree .sel > * { position: relative; }
.red { color: #e06468; }
.tree li > span:has(+ .q) { flex: none; }
.q { width: 8px; height: 8px; margin: 0 8px 0 5px; }
.tree a { color: #7fb2e5; text-decoration: none; }
.panel-tabs { display: flex; height: 22px; font-size: 11px; }
.panel-tabs button { padding: 0 7px; border: 1px solid #282828; border-top: 0; border-left-width: 0; background: #363636; }
.panel-tabs .on { background: #4e4e4e; }

.editor { display: flex; flex-direction: column; flex: 1; min-width: 0; }
.doctabs { display: flex; height: 29px; flex: none; gap: 1px; padding-top: 4px; font-size: 11px; }
.doctabs button { gap: 4px; padding: 0 3px; border-right: 1px solid #272727; background: #383838; border-top: 1px solid #2b2b2b; }
.doctabs svg { width: 13px; height: 13px; }
.doctabs .on { background: #4f4f4f; }
.canvas { position: relative; flex: 1; min-height: 0; background: #6e6a68; }
.board { width: 100%; height: 100%; }
.desig text { font: 200 17px "DejaVu Sans", sans-serif; fill: #ffe010; }
.hud { position: absolute; left: 0; top: 0; padding: 7px 7px 2px; background: #2b2b2b; color: #e6e6e6; }
.hud .xy { display: grid; grid-template-columns: 67px 70px auto; font-size: 13px; line-height: 15px; }
.hud strong { display: block; font-size: 16px; line-height: 18px; color: #f5f500; }
.hud small { display: block; font-family: "Noto Sans", sans-serif; font-size: 10px; line-height: 12px; }
.activebar { position: absolute; left: 50%; top: 4px; display: flex; padding: 0 2px; transform: translateX(-50%); background: #404040; border-radius: 4px; }
.activebar button { position: relative; width: 27px; height: 26px; }
.activebar svg { width: 14px; height: 14px; }
.activebar .m::after { content: ""; position: absolute; right: 2px; bottom: 1px; width: 4px; height: 4px; background: linear-gradient(135deg, transparent 50%, #fff 50%); }
.activebar .end { border-right: 1px solid #303030; }
.activebar .glyph { font: 700 16px "Liberation Serif", serif; color: #5b9be0; }

.layers { display: flex; height: 26px; flex: none; padding-left: 3px; overflow: hidden; font-size: 11px; }
.ls { display: flex; height: 16px; margin: 3px 5px 0 0; border: 1px solid #272727; border-radius: 2px; background: #505050; }
.ls i { width: 26px; background: #f00; }
.ls button { padding: 0 3px; }
.arrows { display: flex; height: 22px; margin-right: 3px; border: 1px solid #272727; background: #505050; }
.arrows button { width: 20px; }
.arrows button + button { border-left: 1px solid #272727; }
.arrows svg { width: 6px; height: 8px; }
.layer { flex: none; height: 22px; gap: 9px; padding: 0 6px; border: 1px solid #2a2a2a; border-width: 0 1px 1px 0; background: #363636; }
.layer i { width: 11px; height: 11px; border: 1px solid #a0a0a0; }
.layer.on { background: #4e4e4e; font-weight: 700; color: #fff; }
.c-red { background: #f00; } .c-blue { background: #00f; } .c-mag { background: #f0f; } .c-pur { background: #800080; }
.c-grn { background: #008000; } .c-blk { background: #000; } .c-yel { background: #ff0; } .c-olv { background: #808000; } .c-gry { background: #808080; }

.right { display: flex; flex-direction: column; align-items: flex-end; gap: 2px; width: 32px; flex: none; padding: 4px 4px 0 0; margin-bottom: 4px; background: #3c3c3c; }
.right button { width: 22px; padding: 3px 0; writing-mode: vertical-rl; font-size: 11px; background: #505050; border: 1px solid #272727; border-radius: 3px; }

.status { display: flex; align-items: center; height: 25px; flex: none; padding: 0 3px 0 5px; background: #404040; font-size: 11px; }
.s1 { width: 147px; } .s2 { width: 100px; } .s3 { width: 154px; } .s4 { width: 404px; }
.status .raised { height: 20px; margin-left: auto; padding: 0 3px; }
```
